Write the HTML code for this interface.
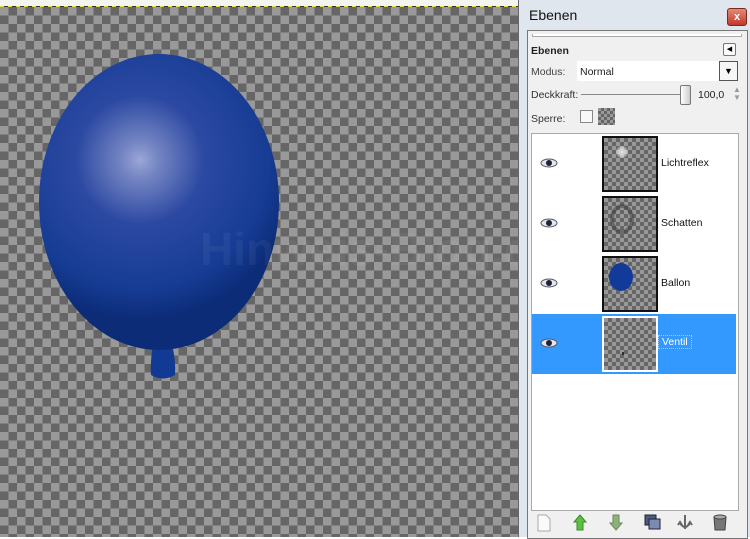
<!DOCTYPE html>
<html><head><style>
body{margin:0;width:750px;height:537px;overflow:hidden;position:relative;font-family:"Liberation Sans",sans-serif;background:#fff}
.canvas{position:absolute;left:0;top:0;width:520px;height:537px;
background-color:#999;
background-image:linear-gradient(45deg,#666 25%,transparent 25%,transparent 75%,#666 75%),linear-gradient(45deg,#666 25%,transparent 25%,transparent 75%,#666 75%);
background-size:17px 17px;background-position:0 7px,8.5px 15.5px}
.topline{position:absolute;left:0;top:0;width:520px;height:6px;background:#f4f4f0}
.topline:after{content:"";position:absolute;left:0;right:0;bottom:-1px;height:1px;background:repeating-linear-gradient(90deg,#e8e040 0 4px,#333 4px 8px)}
.win{position:absolute;left:518px;top:0;width:232px;height:537px;background:#dfe6ee;border-left:1px solid #666}
.title{position:absolute;left:10px;top:7px;font-size:14px;color:#111}
.close{position:absolute;left:208px;top:8px;width:18px;height:16px;background:linear-gradient(#e58a78,#c0392b);border:1px solid #7a2a20;border-radius:3px;color:#fff;font-size:11px;text-align:center;line-height:16px;font-weight:bold}
.panel{position:absolute;left:8px;top:30px;width:219px;height:507px;background:#f0f0f0;border:1px solid #777}
.lbl{position:absolute;font-size:10.5px;color:#222}
.list{position:absolute;left:3px;top:102px;width:206px;height:376px;background:#fff;border:1px solid #aaa}
.row{position:absolute;left:0;width:206px;height:60px}
.thumb{position:absolute;left:70px;top:2px;width:52px;height:52px;border:2px solid #111;
background-color:#999;background-image:linear-gradient(45deg,#666 25%,transparent 25%,transparent 75%,#666 75%),linear-gradient(45deg,#666 25%,transparent 25%,transparent 75%,#666 75%);background-size:8px 8px;background-position:0 0,4px 4px;overflow:hidden}
.name{position:absolute;left:129px;top:23px;font-size:10.5px;color:#111}
.eye{position:absolute;left:8px;top:24px}
</style></head><body>
<div class="canvas"></div>
<div class="topline"></div>
<svg style="position:absolute;left:0;top:0" width="520" height="537">
<defs>
<radialGradient id="b" cx="140" cy="160" r="160" gradientUnits="userSpaceOnUse">
<stop offset="0" stop-color="#9aa6d6"/><stop offset="0.12" stop-color="#7384c2"/><stop offset="0.4" stop-color="#2c49a2"/><stop offset="0.8" stop-color="#163c94"/><stop offset="1" stop-color="#0c2c78"/></radialGradient>
</defs>
<path d="M153 345 Q150 362 151 375 Q163 382 175 375 Q176 360 172 345 Z" fill="#123a94"/>
<ellipse cx="159" cy="202" rx="120" ry="148" fill="url(#b)"/>
<text x="200" y="265" font-family="Liberation Sans" font-weight="bold" font-size="46" fill="#ffffff" fill-opacity="0.05">Hinweis-Blog.de</text>
</svg>
<div class="win">
<div class="title">Ebenen</div>
<div class="close">x</div>
<div class="panel">
<div style="position:absolute;left:4px;top:3px;width:208px;height:2px;border:1px solid #aaa;border-top:none;background:#fff"></div>
<div class="lbl" style="left:3px;top:14px;font-weight:bold">Ebenen</div>
<div style="position:absolute;left:195px;top:12px;width:11px;height:11px;border:1px solid #777;border-radius:2px;background:#fafafa;font-size:7px;line-height:11px;text-align:center">◀</div>
<div class="lbl" style="left:3px;top:35px;color:#444">Modus:</div>
<div style="position:absolute;left:49px;top:30px;width:142px;height:20px;background:#fff"></div>
<div class="lbl" style="left:52px;top:35px">Normal</div>
<div style="position:absolute;left:191px;top:30px;width:17px;height:18px;border:1px solid #555;background:#f6f6f6;font-size:9px;text-align:center;line-height:18px">▼</div>
<div class="lbl" style="left:3px;top:58px;color:#333">Deckkraft:</div>
<div style="position:absolute;left:53px;top:63px;width:105px;height:1px;background:#888"></div>
<div style="position:absolute;left:152px;top:54px;width:9px;height:18px;border:1px solid #777;border-radius:2px;background:linear-gradient(90deg,#fff,#ccc)"></div>
<div class="lbl" style="left:170px;top:58px">100,0</div>
<div class="lbl" style="left:205px;top:55px;font-size:8px;color:#999;line-height:8px">▲<br>▼</div>
<div class="lbl" style="left:3px;top:82px;color:#333">Sperre:</div>
<div style="position:absolute;left:52px;top:79px;width:11px;height:11px;border:1px solid #888;background:#f8f8f8"></div>
<div style="position:absolute;left:70px;top:77px;width:17px;height:17px;background-color:#999;background-image:linear-gradient(45deg,#666 25%,transparent 25%,transparent 75%,#666 75%),linear-gradient(45deg,#666 25%,transparent 25%,transparent 75%,#666 75%);background-size:6px 6px;background-position:0 0,3px 3px"></div>
<div class="list">
<div class="row" style="top:0"><svg class="eye" width="18" height="10"><ellipse cx="9" cy="5" rx="8" ry="4" fill="#dfe6ee" stroke="#556" stroke-width="1"/><circle cx="9" cy="5" r="3" fill="#223"/></svg><div class="thumb"><div style="position:absolute;left:12px;top:8px;width:12px;height:12px;border-radius:50%;background:radial-gradient(#eee,rgba(255,255,255,0))"></div></div><div class="name">Lichtreflex</div></div>
<div class="row" style="top:60px"><svg class="eye" width="18" height="10"><ellipse cx="9" cy="5" rx="8" ry="4" fill="#dfe6ee" stroke="#556" stroke-width="1"/><circle cx="9" cy="5" r="3" fill="#223"/></svg><div class="thumb"><div style="position:absolute;left:6px;top:6px;width:16px;height:22px;border-radius:50%;border:4px solid rgba(60,60,60,.5)"></div></div><div class="name">Schatten</div></div>
<div class="row" style="top:120px"><svg class="eye" width="18" height="10"><ellipse cx="9" cy="5" rx="8" ry="4" fill="#dfe6ee" stroke="#556" stroke-width="1"/><circle cx="9" cy="5" r="3" fill="#223"/></svg><div class="thumb"><div style="position:absolute;left:5px;top:5px;width:24px;height:28px;border-radius:50%;background:#123a9a"></div></div><div class="name">Ballon</div></div>
<div class="row" style="top:180px;background:#3399ff;width:204px"><svg class="eye" width="18" height="10"><ellipse cx="9" cy="5" rx="8" ry="4" fill="#dfe6ee" stroke="#556" stroke-width="1"/><circle cx="9" cy="5" r="3" fill="#223"/></svg><div class="thumb" style="border-color:#fff"><div style="position:absolute;left:18px;top:34px;width:2px;height:3px;background:#234"></div></div><div class="name" style="color:#fff;border:1px dotted #9cf;padding:0 3px;left:126px;top:21px">Ventil</div></div>
</div>
<svg style="position:absolute;left:0;top:478px" width="219" height="28">
<path d="M10 6h8l4 4v12H10z" fill="#fafafa" stroke="#aaa"/>
<path d="M52 6l6 7h-3v8h-6v-8h-3z" fill="#5dc040" stroke="#3a8a2a"/>
<path d="M88 21l6-7h-3V6h-6v8h-3z" fill="#8cb27a" stroke="#6a8a5a"/>
<rect x="117" y="6" width="11" height="10" fill="#4a5c80" stroke="#223"/><rect x="121" y="10" width="11" height="10" fill="#7a8ab0" stroke="#223"/>
<path d="M157 6v14M152 14q5 8 10 0M150 16l2-3 2 3M160 16l2-3 2 3" fill="none" stroke="#666" stroke-width="2"/>
<path d="M186 8h12l-1 13h-10z" fill="#777" stroke="#444"/><ellipse cx="192" cy="8" rx="6" ry="2" fill="#aaa" stroke="#444"/>
</svg>
</div>
</div>
</body></html>
